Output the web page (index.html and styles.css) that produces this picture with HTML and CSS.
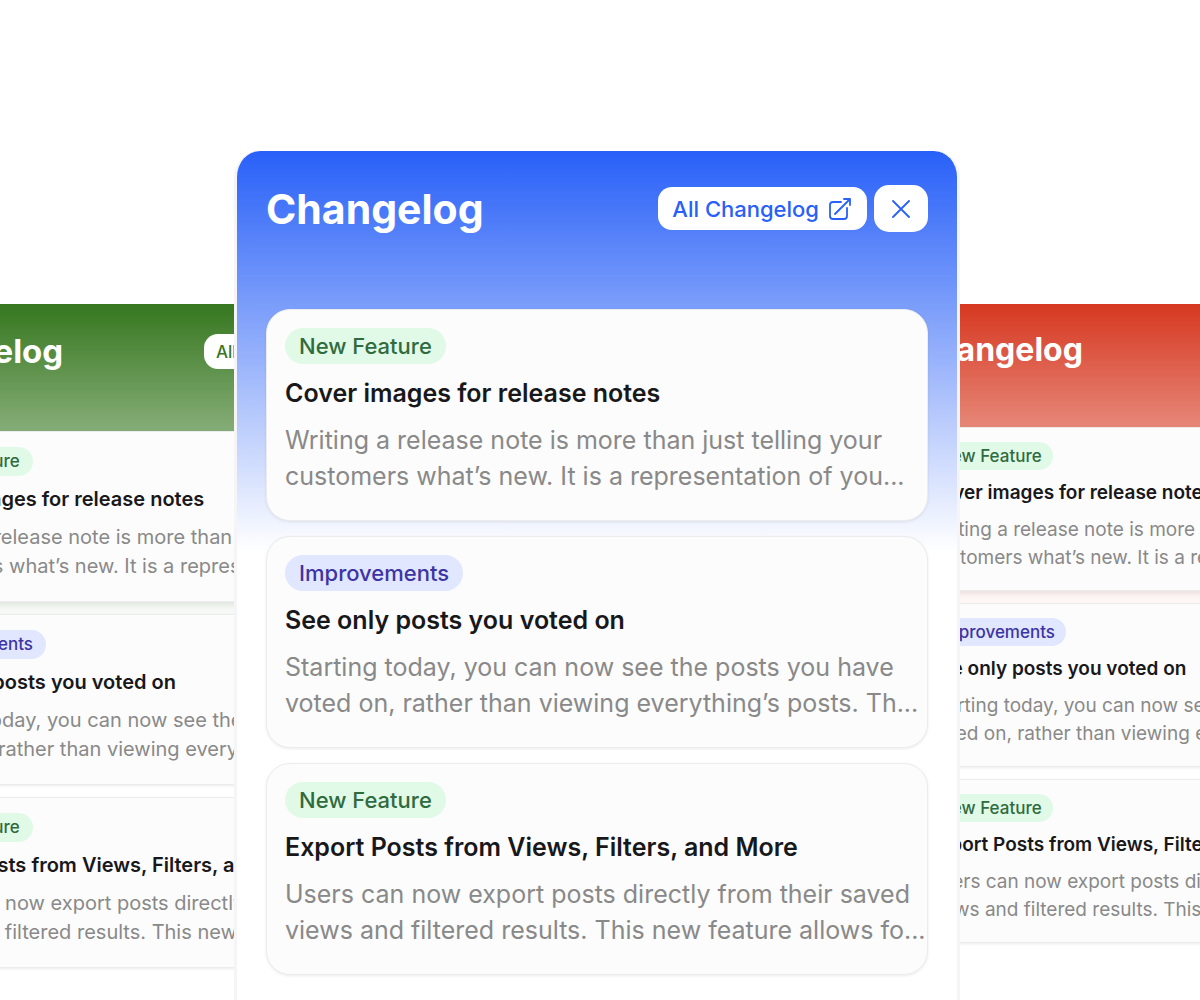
FILE: index.html
```html
<!DOCTYPE html>
<html lang="en">
<head>
  <meta charset="UTF-8">
  <meta name="viewport" content="width=device-width, initial-scale=1">
  <title>Changelog</title>
  <link rel="stylesheet" href="styles.css">
</head>
<body>

  <main class="stage">
    <div class="side">
      <section class="widget widget-green">
        <header class="widget-header">
          <h2>Changelog</h2>
          <a class="all-link" href="#">All Changelog</a>
        </header>
        <article class="card">
          <span class="tag tag-feature">New Feature</span>
          <h3>Cover images for release notes</h3>
          <p>Writing a release note is more than just telling your<br>customers what’s new. It is a representation of you...</p>
        </article>
        <article class="card">
          <span class="tag tag-improvement">Improvements</span>
          <h3>See only posts you voted on</h3>
          <p>Starting today, you can now see the posts you have<br>voted on, rather than viewing everything’s posts. Th...</p>
        </article>
        <article class="card">
          <span class="tag tag-feature">New Feature</span>
          <h3>Export Posts from Views, Filters, and More</h3>
          <p>Users can now export posts directly from their saved<br>views and filtered results. This new feature allows fo...</p>
        </article>
      </section>
    </div>

    <div class="center">
      <section class="widget widget-blue">
        <header class="widget-header">
          <h1>Changelog</h1>
          <a class="all-link" href="#">
            All Changelog
            <svg class="icon-open" viewBox="0 0 22 22" fill="none" stroke="currentColor" stroke-width="1.8" stroke-linecap="round" stroke-linejoin="round">
              <path d="M12 4H4a3 3 0 0 0-3 3v11a3 3 0 0 0 3 3h11a3 3 0 0 0 3-3V10M6 16L21 1M15 1h6v6"/>
            </svg>
          </a>
          <button class="close" type="button" aria-label="Close">
            <svg class="icon-close" viewBox="0 0 18 18" fill="none" stroke="currentColor" stroke-width="1.8" stroke-linecap="round">
              <path d="M1 1l16 16M17 1L1 17"/>
            </svg>
          </button>
        </header>
        <article class="card">
          <span class="tag tag-feature">New Feature</span>
          <h3>Cover images for release notes</h3>
          <p>Writing a release note is more than just telling your<br>customers what’s new. It is a representation of you...</p>
        </article>
        <article class="card">
          <span class="tag tag-improvement">Improvements</span>
          <h3>See only posts you voted on</h3>
          <p>Starting today, you can now see the posts you have<br>voted on, rather than viewing everything’s posts. Th...</p>
        </article>
        <article class="card">
          <span class="tag tag-feature">New Feature</span>
          <h3>Export Posts from Views, Filters, and More</h3>
          <p>Users can now export posts directly from their saved<br>views and filtered results. This new feature allows fo...</p>
        </article>
      </section>
    </div>

    <div class="side">
      <section class="widget widget-red">
        <header class="widget-header">
          <h2>Changelog</h2>
          <a class="all-link" href="#">All Changelog</a>
        </header>
        <article class="card">
          <span class="tag tag-feature">New Feature</span>
          <h3>Cover images for release notes</h3>
          <p>Writing a release note is more than just telling your<br>customers what’s new. It is a representation of you...</p>
        </article>
        <article class="card">
          <span class="tag tag-improvement">Improvements</span>
          <h3>See only posts you voted on</h3>
          <p>Starting today, you can now see the posts you have<br>voted on, rather than viewing everything’s posts. Th...</p>
        </article>
        <article class="card">
          <span class="tag tag-feature">New Feature</span>
          <h3>Export Posts from Views, Filters, and More</h3>
          <p>Users can now export posts directly from their saved<br>views and filtered results. This new feature allows fo...</p>
        </article>
      </section>
    </div>
  </main>

</body>
</html>
```
FILE: styles.css
```css
* {
  box-sizing: border-box;
}

body {
  margin: 0;
  background: #fff;
  color: #18181b;
  font-family: Inter, "Liberation Sans", sans-serif;
}

.stage {
  display: grid;
  grid-template-columns: 39fr 121fr 40fr;
  height: 100vh;
  overflow: hidden;
}

.side {
  min-width: 0;
  padding-top: 304px;
  overflow: hidden;
}

.center {
  min-width: 0;
  padding-top: 151px;
}

.widget {
  display: flex;
  flex-direction: column;
  gap: var(--gap);
  padding: 0 var(--edge);
  background: linear-gradient(var(--accent), #fff) no-repeat #fff;
  background-size: 100% var(--fade);
}

.widget-blue {
  --accent: #2860f8;
  --fade: 400px;
  --gap: 15px;
  --edge: 29px;
  --header: 143px;
  --header-top: 34px;
  --heading: 41px;
  --link: 22px;
  --link-height: 43px;
  --line: 36px;
  --pad: 18px;
  --pad-bottom: 26px;
  --stack: 11px;
  --title: 25px;
  --text: 25px;
  --tag: 22px;
  --tag-pad: 14px;
  --radius: 24px;
  min-height: 100%;
  border: 3px solid #f5f5f7;
  border-width: 0 3px;
  border-radius: 26px 26px 0 0;
}

.widget-green {
  --accent: #36771f;
  --fade: 322px;
  --gap: 12px;
  --edge: 23px;
  --header: 115px;
  --header-top: 28px;
  --heading: 33px;
  --link: 17px;
  --link-height: 35px;
  --line: 29px;
  --pad: 15px;
  --pad-bottom: 20px;
  --stack: 9px;
  --title: 20px;
  --text: 20px;
  --tag: 17px;
  --tag-pad: 13px;
  --radius: 19px;
  width: 580px;
  margin-left: -135px;
}

.widget-red {
  --accent: #d63820;
  --fade: 310px;
  --gap: 12px;
  --edge: 22px;
  --header: 111px;
  --header-top: 27px;
  --heading: 32px;
  --link: 17px;
  --link-height: 33px;
  --line: 28px;
  --pad: 14px;
  --pad-bottom: 18px;
  --stack: 9px;
  --title: 19px;
  --text: 19px;
  --tag: 17px;
  --tag-pad: 11px;
  --radius: 18px;
  width: 558px;
  margin-left: -69px;
}

.widget-header {
  display: flex;
  align-items: flex-start;
  gap: 7px;
  height: var(--header);
  padding-top: var(--header-top);
  color: #fff;
}

h1, h2 {
  flex: 1;
  margin: 0;
  font-size: var(--heading);
  line-height: 1.2;
  font-weight: 700;
}

.all-link {
  display: flex;
  align-items: center;
  gap: 10px;
  height: var(--link-height);
  margin-top: 2px;
  padding: 0 16px 0 14px;
  border-radius: 14px;
  background: #fff;
  color: var(--accent);
  font-size: var(--link);
  font-weight: 500;
  text-decoration: none;
  white-space: nowrap;
}

/* the green widget is cut off just after the start of its link */
.widget-green .all-link {
  width: 218px;
  padding: 0 12px;
}

.icon-open {
  width: 22px;
  height: 22px;
}

.close {
  display: flex;
  align-items: center;
  justify-content: center;
  width: 54px;
  height: 47px;
  padding: 0;
  border: none;
  border-radius: 15px;
  background: #fff;
  color: var(--accent);
  cursor: pointer;
}

.icon-close {
  width: 18px;
  height: 18px;
}

.card {
  display: flex;
  flex-direction: column;
  align-items: flex-start;
  gap: var(--stack);
  padding: var(--pad) var(--pad) var(--pad-bottom);
  border: 1px solid #ececee;
  border-radius: var(--radius);
  background: #fcfcfc;
  box-shadow: 0 1px 3px rgba(0, 0, 0, 0.08);
  white-space: nowrap;
}

.side .card:nth-of-type(1) {
  box-shadow: 0 2px 6px rgba(0, 0, 0, 0.08);
}

.tag {
  padding: 0 var(--tag-pad);
  border-radius: var(--radius);
  font-size: var(--tag);
  line-height: var(--line);
  font-weight: 500;
}

.tag-feature {
  background: #e0fae7;
  color: #316a3e;
}

.tag-improvement {
  background: #e0e7ff;
  color: #3e33a5;
}

h3 {
  margin: 0;
  font-size: var(--title);
  line-height: var(--line);
  font-weight: 600;
}

p {
  margin: 0;
  color: #898989;
  font-size: var(--text);
  line-height: var(--line);
}
```
